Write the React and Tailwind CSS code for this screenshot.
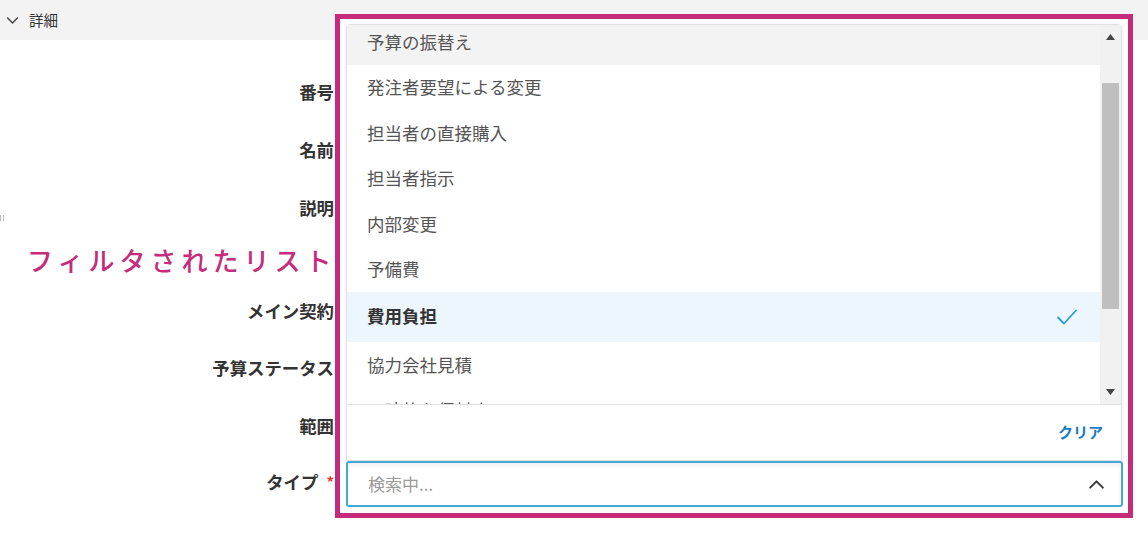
import React from "react";

const font = { fontFamily: '"Noto Sans CJK JP", "Noto Sans", sans-serif' };

const items = [
  { label: "予算の振替え", hover: true },
  { label: "発注者要望による変更" },
  { label: "担当者の直接購入" },
  { label: "担当者指示" },
  { label: "内部変更" },
  { label: "予備費" },
  { label: "費用負担", selected: true },
  { label: "協力会社見積" },
  { label: "一時的な仮対応" },
];

const labels = [
  { text: "番号", h: "h-[58px]" },
  { text: "名前", h: "h-[58px]" },
  { text: "説明", h: "h-[58px]" },
];

const labels2 = [
  { text: "メイン契約", h: "h-[58px]" },
  { text: "予算ステータス", h: "h-[56px]" },
  { text: "範囲", h: "h-[60px]" },
];

const Check = () => (
  <svg width="22" height="18" viewBox="0 0 22 18" fill="none">
    <path d="M2 9.5 L8 15.5 L20 2.5" stroke="#2b9fd4" strokeWidth="1.8" strokeLinecap="round" strokeLinejoin="round" />
  </svg>
);

const Chevron = ({ up, size = 14, color = "#333", w = 2 }) => (
  <svg width={size} height={size} viewBox="0 0 16 16" fill="none">
    <path
      d={up ? "M2 11 L8 5 L14 11" : "M2 5 L8 11 L14 5"}
      stroke={color}
      strokeWidth={w}
      strokeLinecap="round"
      strokeLinejoin="round"
    />
  </svg>
);

const Row = ({ item }) => (
  <div
    className={
      "flex items-center justify-between pl-[20px] pr-[22px] " +
      (item.selected
        ? "h-[50px] bg-[#edf6fc] pb-[1px] font-bold text-[#333]"
        : item.hover
        ? "h-[45.5px] bg-[#f3f3f3] text-[#555]"
        : "h-[45.5px] text-[#555]")
    }
  >
    <span className="text-[17.5px] whitespace-nowrap">{item.label}</span>
    {item.selected && <Check />}
  </div>
);

export default function App() {
  return (
    <div className="relative w-[1148px] h-[538px] overflow-hidden bg-white" style={font}>
      {/* section header */}
      <div className="h-[40px] bg-[#f3f3f3] flex items-center pl-[6px] gap-[10px] text-[#333]">
        <Chevron size={13} color="#444" w={1.8} />
        <span className="text-[14.5px]">詳細</span>
      </div>

      <div className="absolute left-0 top-[215px] flex gap-[2px]">
        <span className="w-[1px] h-[6px] bg-[#bbb]" />
        <span className="w-[1px] h-[6px] bg-[#bbb]" />
      </div>

      {/* form labels */}
      <div className="mt-[23px] w-[334px] flex flex-col text-right font-bold text-[#333] text-[17.4px]">
        {labels.map((l) => (
          <div key={l.text} className={l.h + " flex items-center justify-end"}>
            {l.text}
          </div>
        ))}
        <div className="h-[45px] flex items-center pl-[27px] text-left">
          <span className="text-[26px] font-medium tracking-[5px] whitespace-nowrap text-[#c52c7c]">
            フィルタされたリスト
          </span>
        </div>
        {labels2.map((l) => (
          <div key={l.text} className={l.h + " flex items-center justify-end"}>
            {l.text}
          </div>
        ))}
        <div className="h-[52px] flex items-center justify-end">
          タイプ<span className="ml-[8px] text-[#e03c31] text-[15px]">*</span>
        </div>
      </div>

      {/* annotated popover */}
      <div className="absolute left-[335px] top-[14px] w-[798px] h-[504px] border-[5px] border-[#c52b7b] bg-white pl-[6px] pt-[5px] pr-[5px] pb-[6px] flex flex-col">
        <div className="h-[437px] mr-[1px] border border-[#e2e2e2] rounded-t-[4px] bg-white flex flex-col shadow-[0_1px_3px_rgba(0,0,0,0.08)]">
          <div className="h-[379px] flex overflow-hidden">
            <div className="flex-1 overflow-hidden">
              <div className="-mt-[6px]">
                {items.map((it) => (
                  <Row key={it.label} item={it} />
                ))}
              </div>
            </div>
            <div className="w-[21px] bg-[#f1f1f1] flex flex-col">
              <div className="h-[24px] flex items-center justify-center">
                <svg width="9" height="6" viewBox="0 0 9 6">
                  <path d="M0 6 L4.5 0 L9 6 Z" fill="#444" />
                </svg>
              </div>
              <div className="flex-1 pt-[34px] px-[2px]">
                <div className="h-[226px] bg-[#bfbfbf]" />
              </div>
              <div className="h-[24px] flex items-center justify-center">
                <svg width="9" height="6" viewBox="0 0 9 6">
                  <path d="M0 0 L9 0 L4.5 6 Z" fill="#444" />
                </svg>
              </div>
            </div>
          </div>
          <div className="flex-1 border-t border-[#e2e2e2] flex items-center justify-end pr-[18px]">
            <span className="text-[15px] font-bold text-[#1b7cc0]">クリア</span>
          </div>
        </div>
        <div className="h-[46px] border-2 border-[#45a8da] rounded-[3px] flex items-center justify-between pl-[20px] pr-[16px] shadow-[inset_0_3px_4px_rgba(0,0,0,0.06)]">
          <span className="text-[17px] text-[#9a9a9a]">検索中...</span>
          <Chevron up size={17} color="#333" w={1.8} />
        </div>
      </div>
    </div>
  );
}
